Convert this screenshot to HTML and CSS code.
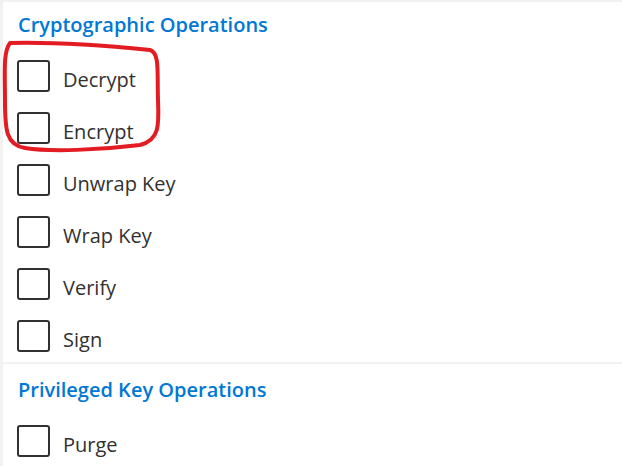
FILE: index.html
```html
<!DOCTYPE html>
<html lang="en">
<head>
<meta charset="utf-8">
<title>Key permissions</title>
<link rel="stylesheet" href="styles.css">
</head>
<body>
<div class="panel">
  <section class="section first">
    <h2 class="title">Cryptographic Operations</h2>
    <div class="list">
      <label class="row"><span class="box"></span><span class="label">Decrypt</span></label>
      <label class="row"><span class="box"></span><span class="label">Encrypt</span></label>
      <label class="row"><span class="box"></span><span class="label">Unwrap Key</span></label>
      <label class="row"><span class="box"></span><span class="label">Wrap Key</span></label>
      <label class="row"><span class="box"></span><span class="label">Verify</span></label>
      <label class="row"><span class="box"></span><span class="label">Sign</span></label>
    </div>
  </section>
  <section class="section second">
    <h2 class="title">Privileged Key Operations</h2>
    <div class="list">
      <label class="row"><span class="box"></span><span class="label">Purge</span></label>
    </div>
  </section>
</div>
<svg class="annotation" width="622" height="466" viewBox="0 0 622 466" xmlns="http://www.w3.org/2000/svg">
  <path d="M10,43 C50,42 110,46 150,50 C160,53 157,72 158,100 C159,124 160,140 140,145 C100,150 50,152 25,148 C6,145 5,130 5,100 C5,72 3,52 10,43 Z" fill="none" stroke="#e31b23" stroke-width="4" stroke-linejoin="round"/>
</svg>
</body>
</html>
```
FILE: styles.css
```css
html, body {
  margin: 0;
  padding: 0;
  background: #ffffff;
}
body {
  width: 622px;
  height: 466px;
  overflow: hidden;
  position: relative;
  font-family: "Open Sans", "Noto Sans", sans-serif;
}
.panel {
  border-left: 3px solid #f3f2f1;
  border-top: 2px solid #f3f2f1;
  height: 100%;
  box-sizing: border-box;
}
.section {
  padding-left: 14px;
}
.section.first {
  padding-top: 9px;
  padding-bottom: 2px;
  border-bottom: 2px solid #f3f2f1;
}
.section.second {
  padding-top: 12px;
}
.title {
  margin: 0 0 21px 1px;
  font-size: 20px;
  line-height: 28px;
  font-weight: 600;
  color: #0078d4;
}
.list {
  display: flex;
  flex-direction: column;
  gap: 12px;
}
.row {
  display: flex;
  align-items: flex-start;
  gap: 13px;
}
.box {
  width: 33px;
  height: 32px;
  box-sizing: border-box;
  border: 2px solid #323130;
  border-radius: 3px;
  flex: none;
}
.label {
  font-size: 20px;
  line-height: 40px;
  color: #323130;
}
.annotation {
  position: absolute;
  left: 0;
  top: 0;
  pointer-events: none;
}
```
